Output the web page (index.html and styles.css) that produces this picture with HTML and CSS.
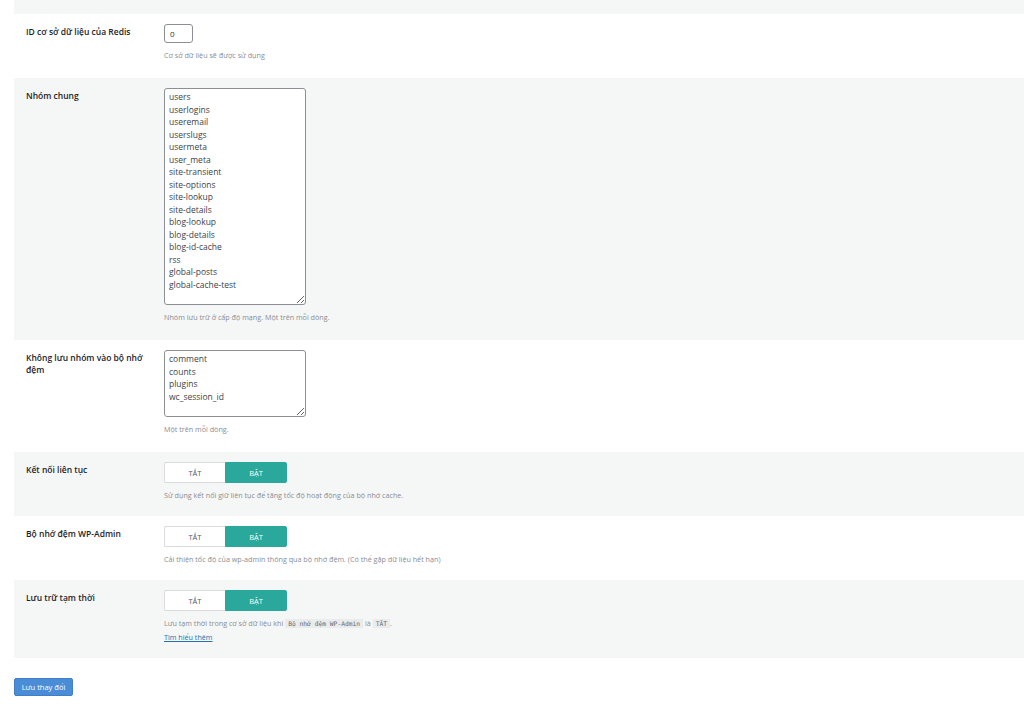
FILE: index.html
```html
<!DOCTYPE html>
<html lang="vi">
<head>
    <meta charset="UTF-8">
    <meta name="viewport" content="width=device-width, initial-scale=1.0">
    <title>Cài đặt Redis Object Cache</title>
    <link rel="stylesheet" href="styles.css">
</head>
<body>

    <!-- Settings form -->
    <form class="settings">
        <div class="setting-row alt top-cut"></div>

        <div class="setting-row text-row">
            <label class="setting-label" for="redis-db">ID cơ sở dữ liệu của Redis</label>
            <div class="setting-field">
                <input type="text" id="redis-db" class="small-input" value="0">
                <p class="field-desc">Cơ sở dữ liệu sẽ được sử dụng</p>
            </div>
        </div>

        <div class="setting-row text-row alt">
            <label class="setting-label" for="global-groups">Nhóm chung</label>
            <div class="setting-field">
                <textarea id="global-groups" class="groups big">users
userlogins
useremail
userslugs
usermeta
user_meta
site-transient
site-options
site-lookup
site-details
blog-lookup
blog-details
blog-id-cache
rss
global-posts
global-cache-test</textarea>
                <p class="field-desc">Nhóm lưu trữ ở cấp độ mạng. Một trên mỗi dòng.</p>
            </div>
        </div>

        <div class="setting-row text-row">
            <label class="setting-label" for="ignored-groups">Không lưu nhóm vào bộ nhớ đệm</label>
            <div class="setting-field">
                <textarea id="ignored-groups" class="groups">comment
counts
plugins
wc_session_id</textarea>
                <p class="field-desc">Một trên mỗi dòng.</p>
            </div>
        </div>

        <div class="setting-row alt">
            <span class="setting-label">Kết nối liên tục</span>
            <div class="setting-field">
                <div class="toggle">
                    <button type="button" class="toggle-opt">TẮT</button>
                    <button type="button" class="toggle-opt on">BẬT</button>
                </div>
                <p class="field-desc">Sử dụng kết nối giữ liên tục để tăng tốc độ hoạt động của bộ nhớ cache.</p>
            </div>
        </div>

        <div class="setting-row">
            <span class="setting-label">Bộ nhớ đệm WP-Admin</span>
            <div class="setting-field">
                <div class="toggle">
                    <button type="button" class="toggle-opt">TẮT</button>
                    <button type="button" class="toggle-opt on">BẬT</button>
                </div>
                <p class="field-desc">Cải thiện tốc độ của wp-admin thông qua bộ nhớ đệm. (Có thể gặp dữ liệu hết hạn)</p>
            </div>
        </div>

        <div class="setting-row alt">
            <span class="setting-label">Lưu trữ tạm thời</span>
            <div class="setting-field">
                <div class="toggle">
                    <button type="button" class="toggle-opt">TẮT</button>
                    <button type="button" class="toggle-opt on">BẬT</button>
                </div>
                <p class="field-desc">Lưu tạm thời trong cơ sở dữ liệu khi <code>Bộ nhớ đệm WP-Admin</code> là <code>TẮT</code>.</p>
                <a href="#" class="more-link">Tìm hiểu thêm</a>
            </div>
        </div>

        <div class="submit-bar">
            <button type="submit" class="save-button">Lưu thay đổi</button>
        </div>
    </form>

</body>
</html>
```

FILE: styles.css
```css
body {
    font-family: "Open Sans", "Noto Sans", sans-serif;
    background-color: #fff;
    color: #1d2327;
    margin: 0;
}
.settings {
    margin-left: 14px;
}
.setting-row {
    display: flex;
    padding: 10px 12px 16px;
}
.setting-row.text-row {
    padding-bottom: 18px;
}
.setting-row.alt {
    background-color: #f5f7f6;
}
.setting-row.top-cut {
    height: 14px;
    padding: 0;
}
.setting-label {
    width: 126px;
    flex-shrink: 0;
    margin-right: 12px;
    font-size: 8.5px;
    font-weight: 600;
    line-height: 12px;
    padding-top: 2px;
}
.setting-field {
    flex: 1;
}
.small-input {
    display: block;
    box-sizing: border-box;
    width: 29px;
    height: 19px;
    padding: 0 5px;
    border: 1px solid #8c8f94;
    border-radius: 3px;
    font-family: inherit;
    font-size: 8px;
    color: #2c3338;
    background: #fff;
}
.groups {
    display: block;
    box-sizing: border-box;
    width: 142px;
    height: 67px;
    margin-bottom: 7px;
    padding: 2px 4px;
    border: 1px solid #8c8f94;
    border-radius: 3px;
    font-family: inherit;
    font-size: 8.5px;
    line-height: 12.5px;
    color: #3c434a;
    background: #fff;
    overflow: hidden;
}
.groups.big {
    height: 217px;
}
.field-desc {
    margin: 7px 0 0;
    font-size: 7.2px;
    line-height: 10px;
    color: #8a8d92;
}
.field-desc code {
    font-family: "DejaVu Sans Mono", monospace;
    font-size: 6.3px;
    background-color: #eaecec;
    color: #646970;
    padding: 1px 3px;
}
.more-link {
    display: block;
    margin-top: 3px;
    font-size: 7.2px;
    line-height: 10px;
    color: #2271b1;
}
.toggle {
    display: flex;
    width: 123px;
    height: 21px;
}
.toggle-opt {
    flex: 1;
    font-family: inherit;
    font-size: 7.5px;
    color: #50575e;
    background-color: #fff;
    border: 1px solid #dcdcde;
    padding: 0;
    cursor: pointer;
}
.toggle-opt:first-child {
    border-right: none;
    border-radius: 2px 0 0 2px;
}
.toggle-opt.on {
    background-color: #2aa89b;
    border-color: #2aa89b;
    color: #fff;
    border-radius: 0 2px 2px 0;
}
.submit-bar {
    padding: 20px 0;
}
.save-button {
    display: block;
    height: 18px;
    width: 59px;
    padding: 0;
    font-family: inherit;
    font-size: 7.5px;
    color: #fff;
    background-color: #4a8dd6;
    border: 1px solid #3f80c9;
    border-radius: 2px;
    cursor: pointer;
}
```
